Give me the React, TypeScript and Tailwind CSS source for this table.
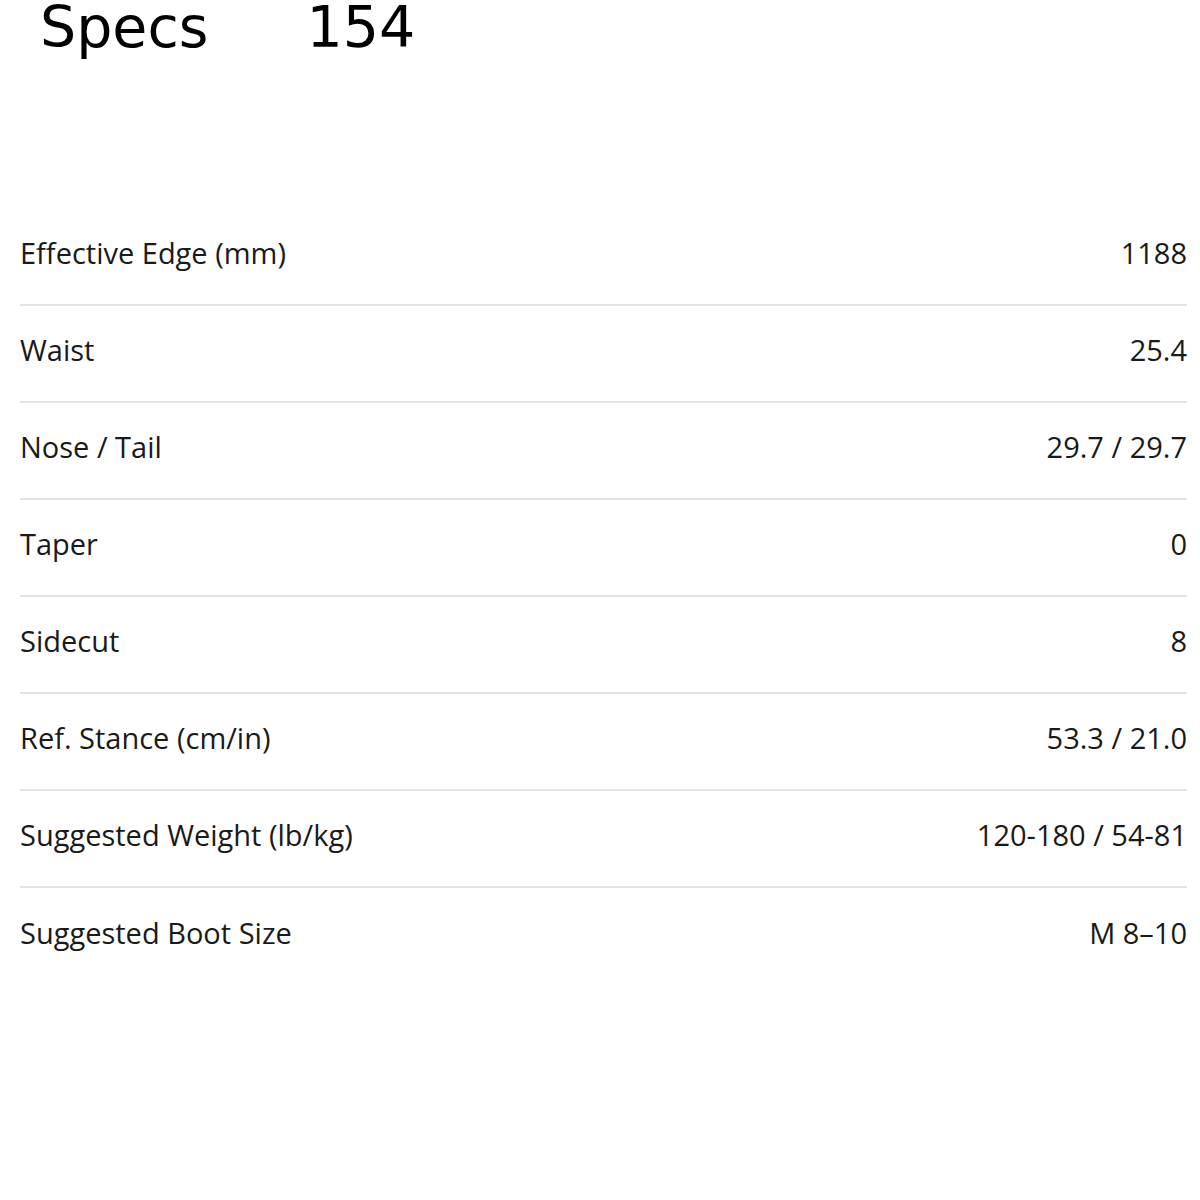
import React from 'react';

const specs: [string, string][] = [
  ['Effective Edge (mm)', '1188'],
  ['Waist', '25.4'],
  ['Nose / Tail', '29.7 / 29.7'],
  ['Taper', '0'],
  ['Sidecut', '8'],
  ['Ref. Stance (cm/in)', '53.3 / 21.0'],
  ['Suggested Weight (lb/kg)', '120-180 / 54-81'],
  ['Suggested Boot Size', 'M 8–10'],
];

const App: React.FC = () => {
  return (
    <div className="w-[1200px] h-[1200px] bg-white overflow-hidden">
      <div className="flex items-baseline pl-[40px] -mt-[3px] text-[57px] leading-[60px] text-black font-['DejaVu_Sans',sans-serif]">
        <span>Specs</span>
        <span className="ml-[98px]">154</span>
      </div>

      <div className="mt-[152px] ml-[20px] mr-[13px] font-['Open_Sans',sans-serif] text-[29px] text-[#1a1a1a]">
        {specs.map(([label, value], i) => (
          <div
            key={label}
            className={`flex items-center justify-between h-[97px] pb-[8px] ${
              i < specs.length - 1 ? 'border-b-2 border-[#e2e2e2]' : ''
            }`}
          >
            <span>{label}</span>
            <span>{value}</span>
          </div>
        ))}
      </div>
    </div>
  );
};

export default App;
